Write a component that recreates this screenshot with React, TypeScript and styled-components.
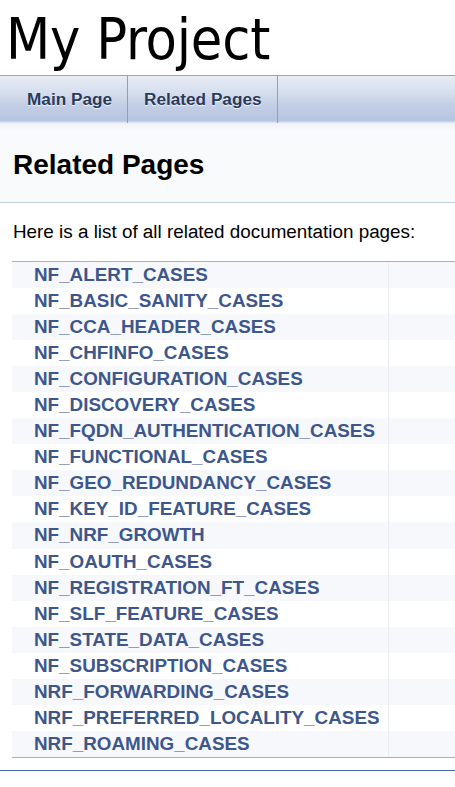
import React from 'react'
import styled, { createGlobalStyle } from 'styled-components'

const GlobalStyle = createGlobalStyle`
  html, body {
    margin: 0;
    padding: 0;
    background: #ffffff;
    overflow: hidden;
  }
  body {
    font-family: "Liberation Sans", Arial, sans-serif;
    font-size: 18.85px;
    color: #000000;
  }
`

const pages = [
  'NF_ALERT_CASES',
  'NF_BASIC_SANITY_CASES',
  'NF_CCA_HEADER_CASES',
  'NF_CHFINFO_CASES',
  'NF_CONFIGURATION_CASES',
  'NF_DISCOVERY_CASES',
  'NF_FQDN_AUTHENTICATION_CASES',
  'NF_FUNCTIONAL_CASES',
  'NF_GEO_REDUNDANCY_CASES',
  'NF_KEY_ID_FEATURE_CASES',
  'NF_NRF_GROWTH',
  'NF_OAUTH_CASES',
  'NF_REGISTRATION_FT_CASES',
  'NF_SLF_FEATURE_CASES',
  'NF_STATE_DATA_CASES',
  'NF_SUBSCRIPTION_CASES',
  'NRF_FORWARDING_CASES',
  'NRF_PREFERRED_LOCALITY_CASES',
  'NRF_ROAMING_CASES',
]

const Page = styled.div`
  width: 455px;
  min-height: 787px;
`

const TitleArea = styled.div`
  height: 75px;
  padding-left: 6px;
  display: flex;
  align-items: flex-start;
`

const ProjectName = styled.div`
  font-family: "DejaVu Sans Condensed", "DejaVu Sans", sans-serif;
  font-size: 57px;
  line-height: 1;
  margin-top: 11px;
  letter-spacing: -0.2px;
`

const Tabs = styled.nav`
  height: 47px;
  border-top: 1px solid #8fa3cb;
  background: linear-gradient(
    to bottom,
    #e8edf6 0%,
    #d3dcec 40%,
    #c3cfe5 60%,
    #b6c5df 95%,
    #e6ecf6 100%
  );
  display: flex;
  padding-left: 11px;
`

const Tab = styled.a`
  display: flex;
  align-items: center;
  padding: 0 15px 0 16px;
  border-right: 1px solid #8aa0cc;
  font-family: "Liberation Sans", Arial, sans-serif;
  font-weight: bold;
  font-size: 17.2px;
  color: #283a5d;
  text-decoration: none;
  text-shadow: 0 1px 1px rgba(255, 255, 255, 0.9);
`

const Header = styled.div`
  height: 79px;
  background: linear-gradient(to bottom, #f0f2f7 0px, #f9fafc 8px);
  border-bottom: 1px solid #c4cfe5;
  display: flex;
  align-items: center;
  padding-left: 13px;
`

const Title = styled.h1`
  margin: 4px 0 0;
  font-size: 28px;
  font-weight: bold;
`

const Contents = styled.div`
  padding: 0 0 0 12px;
`

const Intro = styled.p`
  margin: 17px 0 0 1px;
  line-height: 24px;
`

const Table = styled.div`
  margin-top: 17px;
  border-top: 1px solid #9cafd4;
  border-bottom: 1px solid #9cafd4;
  width: 443px;
`

const Row = styled.div<{ $even: boolean }>`
  display: grid;
  grid-template-columns: 376px 1fr;
  height: 26.05px;
  background: ${(p) => (p.$even ? '#f7f8fb' : '#ffffff')};
`

const Name = styled.a`
  display: flex;
  align-items: center;
  padding-left: 22px;
  font-weight: bold;
  color: #3d578c;
  text-decoration: none;
  white-space: nowrap;
`

const Desc = styled.div`
  border-left: 1px solid #e8ebf2;
`

const Footer = styled.hr`
  margin: 12px 0 0;
  border: 0;
  border-top: 1px solid #4a6aaa;
  height: 0;
`

export default function App() {
  return (
    <Page>
      <GlobalStyle />
      <TitleArea>
        <ProjectName>My Project</ProjectName>
      </TitleArea>
      <Tabs>
        <Tab href="#">Main Page</Tab>
        <Tab href="#">Related Pages</Tab>
      </Tabs>
      <Header>
        <Title>Related Pages</Title>
      </Header>
      <Contents>
        <Intro>Here is a list of all related documentation pages:</Intro>
        <Table>
          {pages.map((p, i) => (
            <Row key={p} $even={i % 2 === 0}>
              <Name href="#">{p}</Name>
              <Desc />
            </Row>
          ))}
        </Table>
      </Contents>
      <Footer />
    </Page>
  )
}
